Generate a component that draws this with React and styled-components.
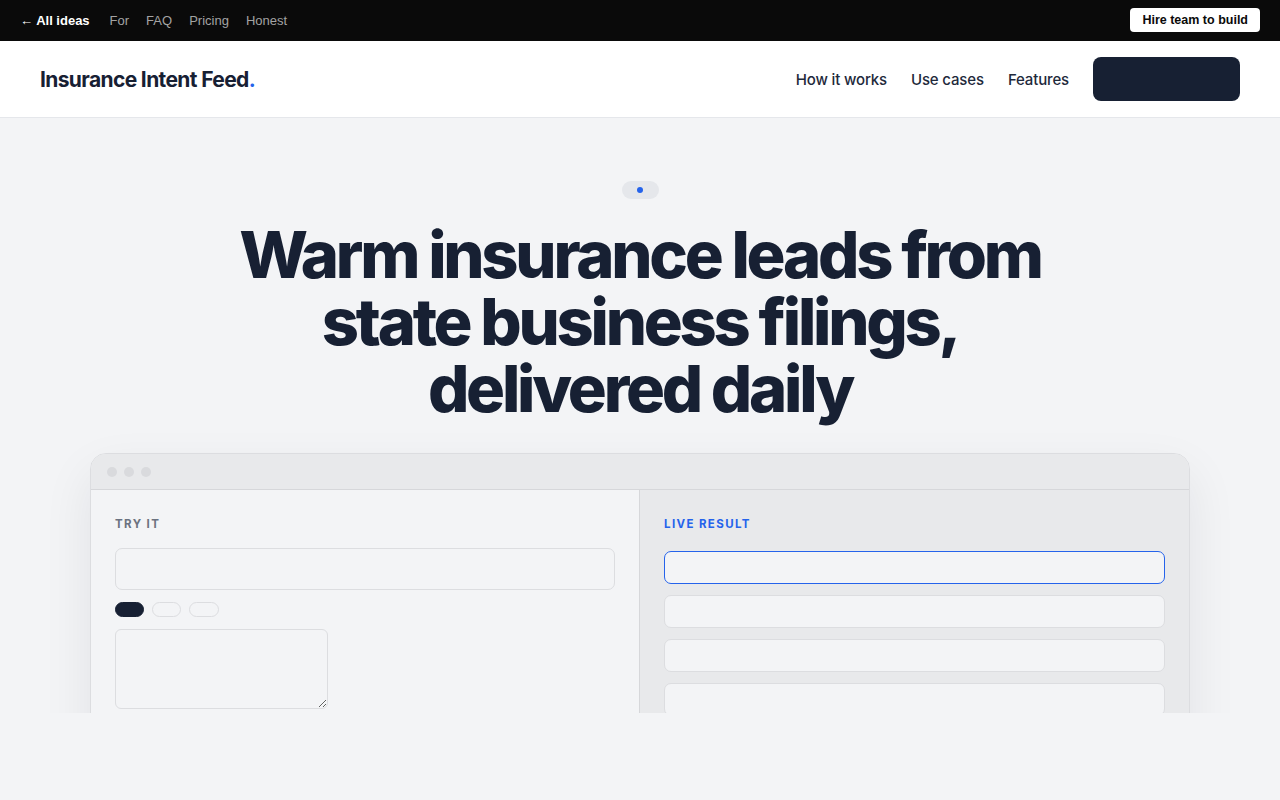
import React from 'react'
import styled, { createGlobalStyle } from 'styled-components';

const GlobalStyle = createGlobalStyle`
  * { box-sizing: border-box; }
  body {
    margin: 0;
    background: #f3f4f6;
    font-family: Inter, "Noto Sans", sans-serif;
    color: #172033;
  }
`;

function App() {
    return (
        <>
            <GlobalStyle />
            <TopBar>
                <TopLinks>
                    <BackLink>← All ideas</BackLink>
                    <TopLink>For</TopLink>
                    <TopLink>FAQ</TopLink>
                    <TopLink>Pricing</TopLink>
                    <TopLink>Honest</TopLink>
                </TopLinks>
                <HireButton>Hire team to build</HireButton>
            </TopBar>

            <Header>
                <Logo>Insurance Intent Feed<span>.</span></Logo>
                <Nav>
                    <NavLink>How it works</NavLink>
                    <NavLink>Use cases</NavLink>
                    <NavLink>Features</NavLink>
                    <CtaButton>Get early access</CtaButton>
                </Nav>
            </Header>

            <Hero>
                <Badge><i /></Badge>
                <Title>
                    Warm insurance leads from<br />
                    state business filings,<br />
                    delivered daily
                </Title>

                <Window>
                    <WindowBar>
                        <Dot /><Dot /><Dot />
                    </WindowBar>
                    <Panels>
                        <Panel>
                            <Label>Try it</Label>
                            <Input />
                            <Chips>
                                <Chip $active />
                                <Chip />
                                <Chip $wide />
                            </Chips>
                            <TextArea />
                        </Panel>
                        <Panel $result>
                            <Label $blue>Live result</Label>
                            <Rows>
                                <ResultRow $selected />
                                <ResultRow />
                                <ResultRow />
                                <ResultRow />
                            </Rows>
                        </Panel>
                    </Panels>
                </Window>
            </Hero>
        </>
    )
}

const TopBar = styled.div`
    height: 41px;
    background: #0a0a0a;
    display: flex;
    align-items: center;
    justify-content: space-between;
    padding: 0 20px 1px 20px;
    font-family: "Liberation Sans", Arial, sans-serif;
    font-size: 13px;
`;

const TopLinks = styled.div`
    display: flex;
    align-items: center;
    gap: 17px;
`;

const BackLink = styled.span`
    color: #fff;
    font-weight: 700;
    margin-right: 3px;
`;

const TopLink = styled.span`
    color: #a3a3a3;
`;

const HireButton = styled.span`
    background: #fff;
    color: #0a0a0a;
    font-weight: 700;
    font-size: 12.5px;
    height: 24px;
    padding: 0 12px;
    border-radius: 4px;
    display: flex;
    align-items: center;
`;

const Header = styled.header`
    height: 77px;
    background: #fff;
    border-bottom: 1px solid #e5e7eb;
    display: flex;
    align-items: center;
    justify-content: space-between;
    padding: 0 40px;
`;

const Logo = styled.div`
    font-size: 21px;
    font-weight: 700;
    letter-spacing: -0.03em;
    color: #172033;
    span { color: #2563eb; }
`;

const Nav = styled.nav`
    display: flex;
    align-items: center;
    gap: 24px;
`;

const NavLink = styled.span`
    font-size: 15px;
    font-weight: 500;
    letter-spacing: -0.01em;
    color: #1e293b;
`;

const CtaButton = styled.span`
    width: 147px;
    height: 44px;
    border-radius: 8px;
    background: #172033;
    color: #172033;
    font-size: 14px;
    display: flex;
    align-items: center;
    justify-content: center;
`;

const Hero = styled.section`
    height: 595px;
    overflow: hidden;
    display: flex;
    flex-direction: column;
    align-items: center;
    padding-top: 63px;
    & > * { flex-shrink: 0; }
`;

const Badge = styled.div`
    width: 37px;
    height: 18px;
    border-radius: 9px;
    background: #e5e7eb;
    display: flex;
    align-items: center;
    justify-content: center;
    i {
        width: 6px;
        height: 6px;
        border-radius: 50%;
        background: #2563eb;
    }
`;

const Title = styled.h1`
    margin: 22px 0 0;
    font-size: 65px;
    line-height: 67px;
    font-weight: 800;
    letter-spacing: -0.05em;
    text-align: center;
    color: #172033;
`;

const Window = styled.div`
    margin-top: 31px;
    width: 1100px;
    border: 1px solid #dcdde0;
    border-radius: 16px;
    overflow: hidden;
    box-shadow: 0 20px 50px rgba(15, 23, 42, 0.08);
`;

const WindowBar = styled.div`
    height: 36px;
    background: #e8e9eb;
    border-bottom: 1px solid #d6d7da;
    display: flex;
    align-items: center;
    gap: 7px;
    padding-left: 16px;
`;

const Dot = styled.span`
    width: 10px;
    height: 10px;
    border-radius: 50%;
    background: #d9dadd;
`;

const Panels = styled.div`
    display: grid;
    grid-template-columns: 548px 1fr;
    height: 260px;
`;

const Panel = styled.div`
    padding: 27px 24px;
    background: ${p => p.$result ? '#e8e9eb' : '#f3f4f6'};
    border-left: ${p => p.$result ? '1px solid #d6d7da' : 'none'};
`;

const Label = styled.div`
    font-size: 11.5px;
    font-weight: 700;
    letter-spacing: 0.12em;
    text-transform: uppercase;
    color: ${p => p.$blue ? '#2563eb' : '#6b7280'};
    margin-bottom: 17px;
`;

const Input = styled.div`
    height: 42px;
    border: 1px solid #dcdde0;
    border-radius: 7px;
    background: #f3f4f6;
`;

const Chips = styled.div`
    display: flex;
    gap: 8px;
    margin: 12px 0;
`;

const Chip = styled.span`
    width: ${p => p.$wide ? '30px' : '29px'};
    height: 15px;
    border-radius: 8px;
    background: ${p => p.$active ? '#172033' : 'transparent'};
    border: 1px solid ${p => p.$active ? '#172033' : '#dcdde0'};
`;

const TextArea = styled.textarea`
    display: block;
    width: 213px;
    height: 80px;
    border: 1px solid #dcdde0;
    border-radius: 6px;
    background: #f3f4f6;
    outline: none;
`;

const Rows = styled.div`
    display: flex;
    flex-direction: column;
    gap: 11px;
    padding-top: 3px;
`;

const ResultRow = styled.div`
    height: 33px;
    border-radius: 7px;
    background: #f3f4f6;
    border: 1px solid ${p => p.$selected ? '#2563eb' : '#dcdde0'};
`;

export default App
